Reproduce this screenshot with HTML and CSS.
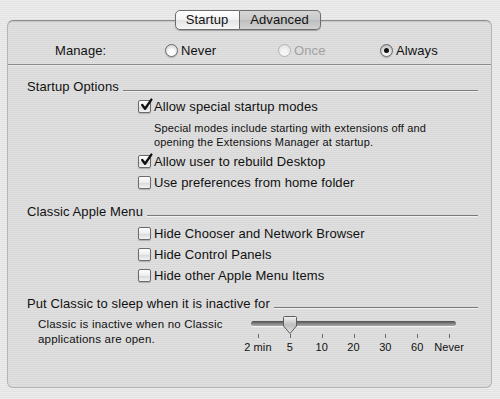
FILE: index.html
```html
<!DOCTYPE html>
<html lang="en">
<head>
  <meta charset="UTF-8" />
  <title>Classic</title>
  <link rel="stylesheet" href="styles.css">
</head>
<body>
  <div class="window">
    <div class="tabs">
      <span class="tab tab-on">Startup</span>
      <span class="tab tab-off">Advanced</span>
    </div>

    <div class="panel">
      <div class="manage">
        <span class="manage-label">Manage:</span>
        <label class="radio-item w-never"><span class="radio"></span>Never</label>
        <label class="radio-item w-once disabled"><span class="radio"></span>Once</label>
        <label class="radio-item"><span class="radio radio-on"></span>Always</label>
      </div>
      <div class="divider"></div>

      <div class="section s-startup">
        <div class="heading">Startup Options</div>
        <div class="options">
          <div class="check-row first">
            <span class="checkbox"><svg viewBox="0 0 13 13"><path d="M3 6.5 L5.6 10 L11.5 1.5" /></svg></span>
            Allow special startup modes
          </div>
          <div class="note">Special modes include starting with extensions off and<br>opening the Extensions Manager at startup.</div>
          <div class="check-row after-note">
            <span class="checkbox"><svg viewBox="0 0 13 13"><path d="M3 6.5 L5.6 10 L11.5 1.5" /></svg></span>
            Allow user to rebuild Desktop
          </div>
          <div class="check-row">
            <span class="checkbox"></span>
            Use preferences from home folder
          </div>
        </div>
      </div>

      <div class="section s-menu">
        <div class="heading">Classic Apple Menu</div>
        <div class="options">
          <div class="check-row first"><span class="checkbox"></span>Hide Chooser and Network Browser</div>
          <div class="check-row"><span class="checkbox"></span>Hide Control Panels</div>
          <div class="check-row"><span class="checkbox"></span>Hide other Apple Menu Items</div>
        </div>
      </div>

      <div class="section s-sleep">
        <div class="heading">Put Classic to sleep when it is inactive for</div>
        <div class="sleep-body">
          <div class="sleep-note">Classic is inactive when no Classic<br>applications are open.</div>
          <div class="slider">
            <div class="track"></div>
            <svg class="thumb" viewBox="0 0 16 20">
              <defs>
                <linearGradient id="tg" x1="0" y1="0" x2="0" y2="1">
                  <stop offset="0" stop-color="#f4f4f4" />
                  <stop offset="0.5" stop-color="#bdbdbd" />
                  <stop offset="1" stop-color="#e8e8e8" />
                </linearGradient>
              </defs>
              <path d="M2.5 1.5 H13.5 Q14.5 1.5 14.5 2.5 V11 L8 18.5 L1.5 11 V2.5 Q1.5 1.5 2.5 1.5 Z" fill="url(#tg)" stroke="#5c5c5c" stroke-width="1" />
            </svg>
            <div class="ticks">
              <span class="stop">2 min</span>
              <span class="stop">5</span>
              <span class="stop">10</span>
              <span class="stop">20</span>
              <span class="stop">30</span>
              <span class="stop">60</span>
              <span class="stop">Never</span>
            </div>
          </div>
        </div>
      </div>
    </div>
  </div>
</body>
</html>
```

FILE: styles.css
```css
body {
  margin: 0;
  padding: 0;
  font-family: "Liberation Sans", "DejaVu Sans", sans-serif;
  font-size: 13px;
  letter-spacing: 0.1px;
  color: #111;
  background: repeating-linear-gradient(#ececec 0 1px, #e3e3e3 1px 2px);
}

.window {
  width: 500px;
  height: 399px;
  padding-top: 10px;
  box-sizing: border-box;
  overflow: hidden;
}

/* segmented tab control sitting on the panel edge */
.tabs {
  display: flex;
  justify-content: center;
  margin-left: -5px;
  margin-bottom: -10px;
  position: relative;
  z-index: 2;
}

.tab {
  height: 18px;
  line-height: 18px;
  text-align: center;
  border: 1px solid #6e6e6e;
  box-shadow: 0 1px 1px rgba(0, 0, 0, 0.25);
}

.tab-on {
  width: 63px;
  border-radius: 5px 0 0 5px;
  background: linear-gradient(#ffffff, #f2f2f2 50%, #e4e4e4 51%, #f6f6f6);
}

.tab-off {
  width: 80px;
  border-left: none;
  border-radius: 0 5px 5px 0;
  background: linear-gradient(#d6d6d6, #c9c9c9 50%, #bdbdbd 51%, #d2d2d2);
}

.panel {
  margin: 0 8px 0 7px;
  height: 368px;
  box-sizing: border-box;
  border: 1px solid #b4b4b4;
  border-top-color: #8c8c8c;
  border-radius: 6px;
  background: repeating-linear-gradient(#e0e0e0 0 1px, #d8d8d8 1px 2px);
  box-shadow: inset 0 1px 0 #c8c8c8;
  padding-top: 19px;
}

.manage {
  display: flex;
  align-items: center;
  height: 20px;
  padding-left: 47px;
}

.manage-label {
  width: 110px;
}

.radio-item {
  display: flex;
  align-items: center;
  gap: 3px;
}

.w-never { width: 113px; }
.w-once { width: 102px; }

.radio {
  width: 13px;
  height: 13px;
  box-sizing: border-box;
  border-radius: 50%;
  border: 1px solid #6a6a6a;
  background: radial-gradient(circle at 50% 70%, #ffffff 30%, #d8d8d8 75%, #bcbcbc);
  box-shadow: 0 1px 1px rgba(0, 0, 0, 0.2);
  position: relative;
}

.radio-on {
  background: radial-gradient(circle at 50% 70%, #f2f2f2 30%, #bdbdbd 75%, #999);
}

.radio-on::after {
  content: "";
  position: absolute;
  left: 3px;
  top: 3px;
  width: 5px;
  height: 5px;
  border-radius: 50%;
  background: #111;
}

.disabled {
  color: #a2a2a2;
}

.disabled .radio {
  border-color: #b4b4b4;
  background: radial-gradient(circle at 50% 70%, #f4f4f4 30%, #e2e2e2 80%);
  box-shadow: none;
}

.divider {
  margin-top: 4px;
  height: 1px;
  background: #8a8a8a;
  border-bottom: 1px solid #ececec;
}

.section {
  padding-left: 19px;
  padding-right: 13px;
}

.heading {
  display: flex;
  align-items: center;
  height: 18px;
  white-space: nowrap;
}

.heading::after {
  content: "";
  flex: 1;
  margin-left: 4px;
  margin-top: 10px;
  height: 1px;
  background: #7a7a7a;
  border-bottom: 1px solid #f0f0f0;
}

.s-startup { margin-top: 11px; }
.s-menu { margin-top: 9px; }
.s-sleep { margin-top: 8px; }

.options {
  padding-left: 111px;
}

.check-row {
  display: flex;
  align-items: center;
  gap: 3px;
  height: 21px;
}

.check-row.first { margin-top: 1px; }
.s-menu .check-row.first { margin-top: 3px; }
.check-row.after-note { margin-top: 2px; }

.checkbox {
  width: 13px;
  height: 13px;
  box-sizing: border-box;
  border: 1px solid #6a6a6a;
  border-radius: 2px;
  background: linear-gradient(#ffffff, #ececec 50%, #d6d6d6 51%, #f4f4f4);
  box-shadow: 0 1px 1px rgba(0, 0, 0, 0.2);
  position: relative;
  flex: none;
}

.checkbox svg {
  position: absolute;
  left: 0;
  top: -3px;
  width: 14px;
  height: 14px;
  overflow: visible;
}

.checkbox path {
  fill: none;
  stroke: #111;
  stroke-width: 2.2;
  stroke-linecap: round;
  stroke-linejoin: round;
}

.note {
  margin-top: 4px;
  padding-left: 16px;
  font-size: 11px;
  letter-spacing: 0.15px;
  line-height: 14px;
}

.sleep-body {
  display: flex;
  margin-top: 4px;
}

.sleep-note {
  width: 204px;
  padding-left: 11px;
  font-size: 11.5px;
  letter-spacing: 0.2px;
  line-height: 15px;
  padding-top: 1px;
}

.slider {
  position: relative;
  width: 223px;
  padding-top: 5px;
}

.track {
  margin: 0 9px;
  height: 5px;
  border-radius: 3px;
  background: linear-gradient(#4e4e4e, #8a8a8a 60%, #a8a8a8);
  box-shadow: 0 1px 0 #f2f2f2;
}

.thumb {
  position: absolute;
  left: 40px;
  top: -1px;
  width: 16px;
  height: 20px;
}

.ticks {
  display: flex;
  margin-top: 9px;
}

.stop {
  flex: 1;
  text-align: center;
  font-size: 11px;
  line-height: 14px;
  padding-top: 5px;
  position: relative;
}

.stop::before {
  content: "";
  position: absolute;
  left: 50%;
  top: -1px;
  width: 1px;
  height: 4px;
  background: #6a6a6a;
}
```
